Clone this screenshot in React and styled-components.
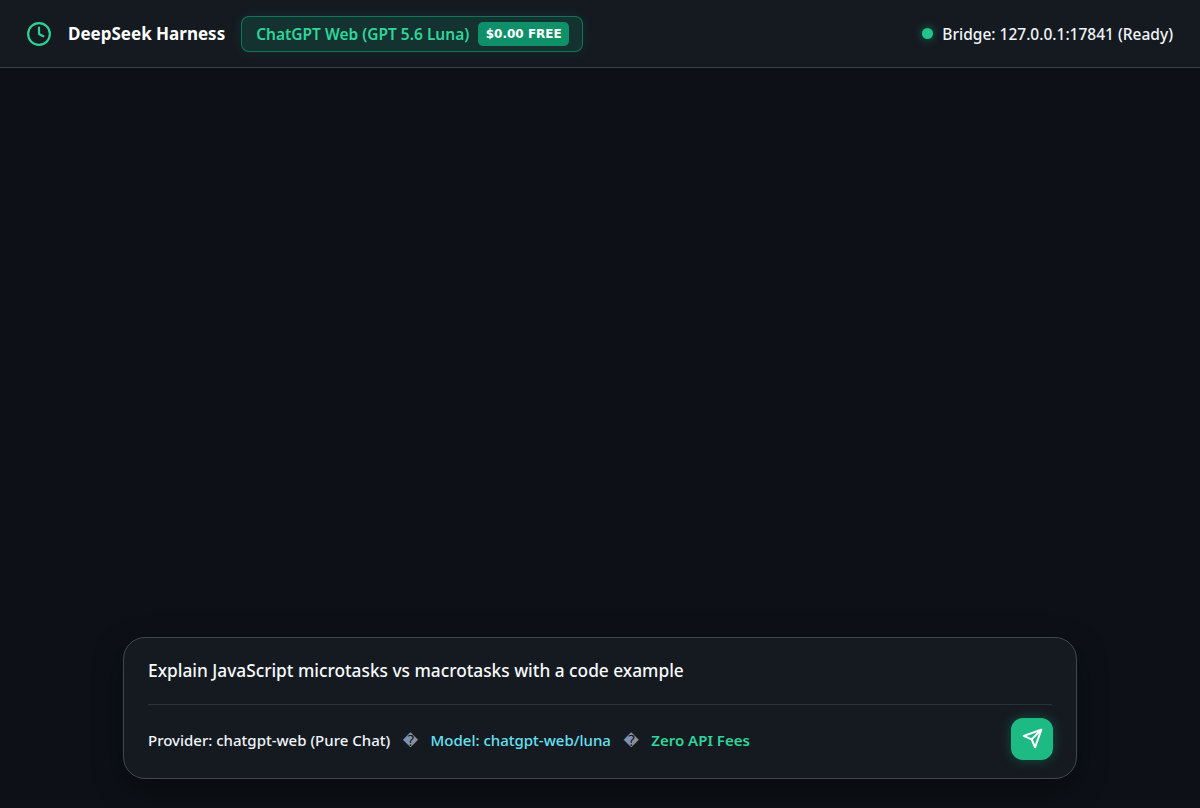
import React from 'react'
import styled, { createGlobalStyle } from 'styled-components'

const Global = createGlobalStyle`
html, body {
    margin: 0;
    height: 100%;
    background: #0d1117;
}
#root {
    height: 100%;
}
* {
    box-sizing: border-box;
}
`

const Page = styled.div`
height: 808px;
display: flex;
flex-direction: column;
overflow: hidden;
font-family: "Noto Sans", "Open Sans", sans-serif;
color: #f8fafc;
`

const Header = styled.header`
height: 68px;
flex-shrink: 0;
display: flex;
align-items: center;
justify-content: space-between;
padding: 0 27px 0 26px;
background: #151a21;
border-bottom: 1px solid #3a3e44;
`

const Brand = styled.div`
display: flex;
align-items: center;
`

const Logo = styled.svg`
width: 26px;
height: 26px;
margin-right: 16px;
color: #2bd495;
`

const Title = styled.h1`
margin: 0 16px 0 0;
font-size: 17px;
font-weight: 700;
color: #fff;
`

const ModelBadge = styled.div`
height: 36px;
display: flex;
align-items: center;
gap: 9px;
padding: 0 13px 0 14px;
border: 1px solid rgba(16, 185, 129, 0.5);
border-radius: 8px;
background: rgba(16, 185, 129, 0.16);
box-shadow: 0 0 12px rgba(16, 185, 129, 0.12);
color: #2fd59a;
font-size: 15.5px;
font-weight: 600;
`

const Price = styled.span`
height: 24px;
display: flex;
align-items: center;
padding: 0 7.5px;
border-radius: 5px;
background: #0f9068;
color: #fff;
font-family: "DejaVu Sans", sans-serif;
font-size: 12px;
font-weight: 700;
`

const Bridge = styled.div`
display: flex;
align-items: center;
gap: 9px;
font-size: 15.5px;
font-weight: 500;
color: #f1f5f9;
`

const Dot = styled.span`
width: 11px;
height: 11px;
border-radius: 50%;
background: #22c58b;
box-shadow: 0 0 8px rgba(16, 185, 129, 0.6);
`

const Main = styled.main`
flex: 1;
display: flex;
flex-direction: column;
justify-content: flex-end;
align-items: center;
padding-bottom: 29px;
background: #0d1117;
`

const Composer = styled.section`
width: 954px;
height: 142px;
display: flex;
flex-direction: column;
padding: 0 24px;
border: 1px solid #44484e;
border-radius: 22px;
background: #151a21;
box-shadow: 0 10px 30px rgba(0, 0, 0, 0.45);
`

const Prompt = styled.div`
height: 67px;
display: flex;
align-items: center;
padding-bottom: 2px;
border-bottom: 1px solid #2c3037;
font-size: 17.3px;
font-weight: 500;
color: #f8fafc;
`

const Footer = styled.div`
flex: 1;
display: flex;
align-items: center;
justify-content: space-between;
padding-bottom: 6px;
`

const Meta = styled.div`
display: flex;
align-items: center;
gap: 12.5px;
padding-top: 2px;
font-size: 15px;
font-weight: 500;
`

const MetaItem = styled.span`
color: ${(p) => p.$color};
font-weight: ${(p) => p.$weight || 500};
`

const Sep = styled.span`
padding-top: 3px;
font-family: "DejaVu Sans", sans-serif;
font-size: 15px;
color: #8391a8;
`

const SendButton = styled.button`
width: 42px;
height: 42px;
display: flex;
align-items: center;
justify-content: center;
margin-right: -1px;
padding: 0;
border: none;
border-radius: 12px;
background: #1dba84;
color: #fff;
box-shadow: 0 0 12px rgba(16, 185, 129, 0.35);
cursor: pointer;
`

const App = () => {
    return (
        <Page>
            <Global />
            <Header>
                <Brand>
                    <Logo viewBox="0 0 24 24" fill="none" stroke="currentColor" strokeWidth="2" strokeLinecap="round" strokeLinejoin="round">
                        <circle cx="12" cy="12" r="10" />
                        <polyline points="12 6 12 12 16 14" />
                    </Logo>
                    <Title>DeepSeek Harness</Title>
                    <ModelBadge>
                        ChatGPT Web (GPT 5.6 Luna)
                        <Price>$0.00 FREE</Price>
                    </ModelBadge>
                </Brand>
                <Bridge>
                    <Dot />
                    Bridge: 127.0.0.1:17841 (Ready)
                </Bridge>
            </Header>
            <Main>
                <Composer>
                    <Prompt>Explain JavaScript microtasks vs macrotasks with a code example</Prompt>
                    <Footer>
                        <Meta>
                            <MetaItem $color="#f1f5f9">Provider: chatgpt-web (Pure Chat)</MetaItem>
                            <Sep>{'\uFFFD'}</Sep>
                            <MetaItem $color="#67e0f2">Model: chatgpt-web/luna</MetaItem>
                            <Sep>{'\uFFFD'}</Sep>
                            <MetaItem $color="#2fd59a" $weight={600}>Zero API Fees</MetaItem>
                        </Meta>
                        <SendButton>
                            <svg width="21" height="21" viewBox="0 0 24 24" fill="none" stroke="currentColor" strokeWidth="2.4" strokeLinecap="round" strokeLinejoin="round">
                                <line x1="22" y1="2" x2="11" y2="13" />
                                <polygon points="22 2 15 22 11 13 2 9 22 2" />
                            </svg>
                        </SendButton>
                    </Footer>
                </Composer>
            </Main>
        </Page>
    )
}

export default App
